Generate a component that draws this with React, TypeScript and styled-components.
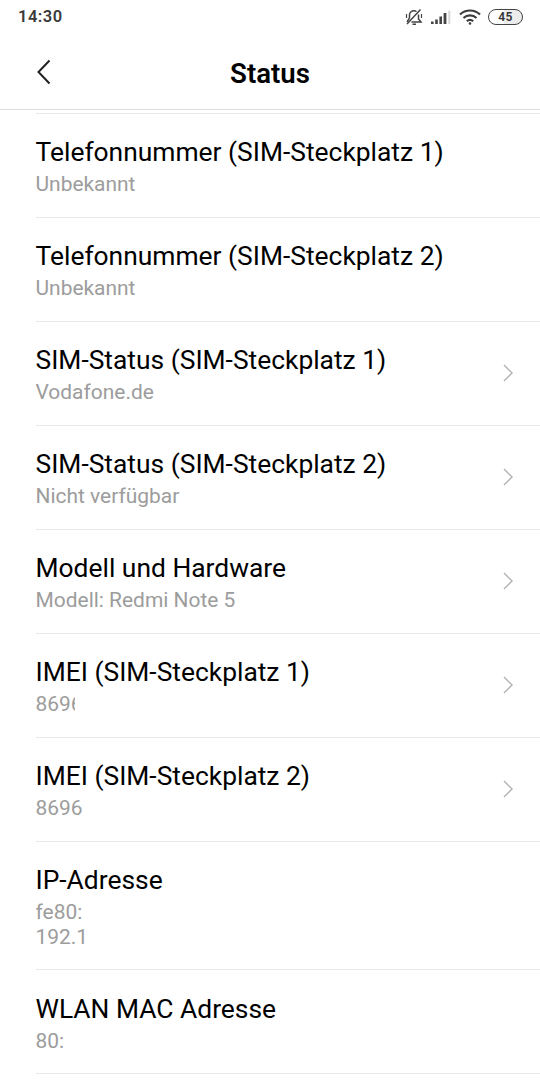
import React from "react";
import styled, { createGlobalStyle } from "styled-components";

const Global = createGlobalStyle`
  *{box-sizing:border-box}
  html,body{margin:0;background:#fff}
  body{font-family:Roboto,"Noto Sans",sans-serif;color:#000;overflow:hidden}
`;
const Screen = styled.main`
  width: 540px;
  height: 1080px;
  overflow: hidden;
  background: #fff;
  display: flex;
  flex-direction: column;
`;
const StatusBar = styled.div`
  height: 34px;
  flex: none;
  display: flex;
  align-items: center;
  justify-content: space-between;
  padding: 0 17px 0 18px;
`;
const Clock = styled.span`
  font: 600 16.5px/20px Roboto, sans-serif;
  letter-spacing: 0.5px;
  color: #3a3a3a;
`;
const Indicators = styled.div`
  display: flex;
  align-items: center;
`;
const BellOff = styled.svg`margin-right: 8px;`;
const Signal = styled.svg`margin-right: 8px;`;
const Wifi = styled.svg`margin-right: 7px;`;
const Battery = styled.span`
  width: 35px;
  height: 16px;
  border: 1.5px solid #444;
  border-radius: 8px;
  background: linear-gradient(90deg, #fff 0 45%, #ececec 45%);
  font: 600 12px/14px Roboto, sans-serif;
  letter-spacing: 0.3px;
  text-align: center;
  color: #333;
`;
const Header = styled.header`
  height: 76px;
  flex: none;
  display: grid;
  grid-template-columns: 80px 1fr 80px;
  align-items: center;
  border-bottom: 1px solid #dedede;
`;
const Back = styled.button`
  border: 0;
  background: none;
  padding: 0 0 0 36px;
  display: flex;
`;
const Title = styled.h1`
  margin: 0;
  padding-top: 4px;
  font: 600 27.6px/32px Roboto, sans-serif;
  text-align: center;
`;
const List = styled.section`
  padding-left: 35.5px;
  margin-top: 3px;
`;
const Row = styled.div<{ $h?: number; $top?: number }>`
  height: ${p => p.$h ?? 104}px;
  border-top: 1px solid #e8e8e8;
  display: flex;
  justify-content: space-between;
  padding: ${p => p.$top ?? 22}px 26px 0 0;
`;
const Label = styled.div`
  font-size: 26.4px;
  line-height: 32px;
  white-space: nowrap;
`;
const Value = styled.div<{ $clip?: number }>`
  margin-top: 4px;
  font-size: 20.95px;
  line-height: 25px;
  color: #9c9c9c;
  white-space: pre;
  overflow: hidden;
  width: ${p => (p.$clip ? `${p.$clip}px` : "auto")};
`;
const Chevron = styled.svg`margin-top: 20px;`;

type Item = { label: string; value: string; link?: boolean; clip?: number; h?: number; top?: number };
const items: Item[] = [
  { label: "Telefonnummer (SIM-Steckplatz 1)", value: "Unbekannt" },
  { label: "Telefonnummer (SIM-Steckplatz 2)", value: "Unbekannt" },
  { label: "SIM-Status (SIM-Steckplatz 1)", value: "Vodafone.de", link: true },
  { label: "SIM-Status (SIM-Steckplatz 2)", value: "Nicht verfügbar", link: true },
  { label: "Modell und Hardware", value: "Modell: Redmi Note 5", link: true },
  { label: "IMEI (SIM-Steckplatz 1)", value: "8696", link: true, clip: 39 },
  { label: "IMEI (SIM-Steckplatz 2)", value: "8696", link: true, clip: 46 },
  { label: "IP-Adresse", value: "fe80:\n192.1", h: 128 },
  { label: "WLAN MAC Adresse", value: "80:", top: 23 },
  { label: "", value: "" },
];

export default function App() {
  return (
    <Screen>
      <Global />
      <StatusBar>
        <Clock>14:30</Clock>
        <Indicators>
          <BellOff width="18" height="18" viewBox="0 0 18 18" fill="none" stroke="#444" strokeWidth="1.5">
            <path d="M4.500 10V7C4.500 4.500 6.500 2.800 9 2.800c1 0 1.800.2 2.500.7M13.500 6.500V11l2.500 3H6.500M4.500 10L2 13.800M7.500 16.200h3.500M2 16L15.500 1.500" />
            <path d="M1.500 6v4M16.500 6v4" strokeWidth="1.200" />
          </BellOff>
          <Signal width="20" height="14" viewBox="0 0 20 14" fill="#444">
            <path d="M0 11.500h2.600V14H0zM4.200 9.500h2.600V14H4.200zM8.400 6.500H11V14H8.400zM12.600 3h2.800v11h-2.800z" />
            <path d="M17.300 0.500h2V14h-2z" fill="#d8d8d8" />
          </Signal>
          <Wifi width="22" height="16" viewBox="0 0 22 16" fill="none" stroke="#3c3c3c" strokeWidth="2.200">
            <path d="M1 5.500a14.500 14.500 0 0 1 20 0M4.500 9a9.500 9.500 0 0 1 13 0M7.800 12.200a5 5 0 0 1 6.400 0" />
            <circle cx="11" cy="14.500" r="1.300" fill="#3c3c3c" stroke="none" />
          </Wifi>
          <Battery>45</Battery>
        </Indicators>
      </StatusBar>
      <Header>
        <Back aria-label="Zurück">
          <svg width="16" height="26" viewBox="0 0 16 26" fill="none" stroke="#222" strokeWidth="2">
            <path d="M13.500 1.500L2.500 13l11 11.500" />
          </svg>
        </Back>
        <Title>Status</Title>
      </Header>
      <List>
        {items.map((it, i) => (
          <Row key={i} $h={it.h} $top={it.top}>
            <div>
              <Label>{it.label}</Label>
              <Value $clip={it.clip}>{it.value}</Value>
            </div>
            {it.link && (
              <Chevron width="12" height="18" viewBox="0 0 12 18" fill="none" stroke="#b5b5b5" strokeWidth="1.500">
                <path d="M2 1l8 8-8 8" />
              </Chevron>
            )}
          </Row>
        ))}
      </List>
    </Screen>
  );
}
